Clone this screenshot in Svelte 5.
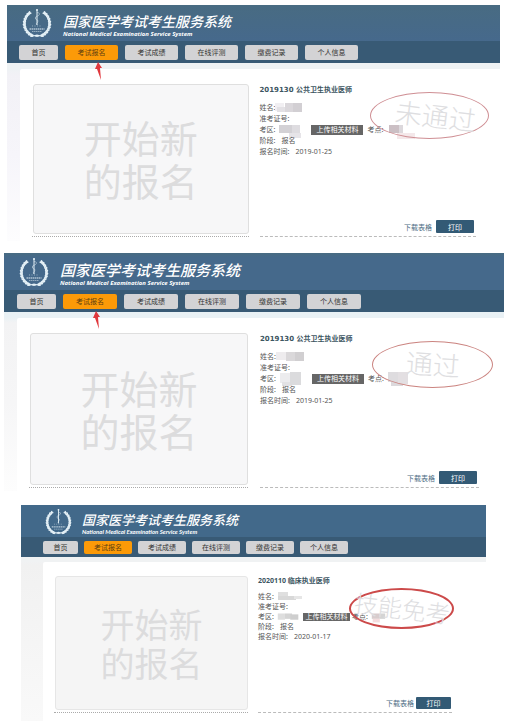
<script lang="ts">
  type Block = [x: number, y: number, w: number, h: number, color: string];

  type Panel = {
    id: string;
    exam: string;
    date: string;
    result: string;
    nameMask: Block[];
    areaMask: Block[];
    siteMask: Block[];
  };

  const menu = ["首页", "考试报名", "考试成绩", "在线评测", "缴费记录", "个人信息"];
  const active = "考试报名";

  const panels: Panel[] = [
    {
      id: "first",
      exam: "2019130 公共卫生执业医师",
      date: "2019-01-25",
      result: "未通过",
      nameMask: [
        [0, 1, 9, 8, "#f1eff2"],
        [2, 5, 8, 5, "#e3e1e5"],
        [10, 1, 8, 9, "#dad7db"],
        [18, 1, 9, 9, "#d2cfd3"],
      ],
      areaMask: [
        [0, 1, 13, 8, "#d3d1d5"],
        [13, 1, 8, 8, "#dedce0"],
        [10, 9, 12, 5, "#e6e4e8"],
      ],
      siteMask: [
        [2, 1, 10, 8, "#cbbfc4"],
        [12, 1, 4, 8, "#dcd8dc"],
        [10, 9, 18, 6, "#f4e8ea"],
      ],
    },
    {
      id: "second",
      exam: "2019130 公共卫生执业医师",
      date: "2019-01-25",
      result: "通过",
      nameMask: [
        [0, 1, 10, 8, "#eeecee"],
        [10, 1, 9, 9, "#dad8da"],
        [19, 1, 9, 9, "#d1cfd1"],
      ],
      areaMask: [
        [0, 0, 10, 10, "#ececee"],
        [2, 9, 10, 4, "#e2e2e4"],
        [10, -1, 11, 13, "#dbdbdd"],
      ],
      siteMask: [
        [0, -1, 10, 10, "#dedcdf"],
        [3, 8, 12, 5, "#dcd9dc"],
        [10, -1, 10, 12, "#e3dfe2"],
      ],
    },
    {
      id: "third",
      exam: "2020110 临床执业医师",
      date: "2020-01-17",
      result: "技能免考",
      nameMask: [
        [4, 0, 10, 4, "#dfdfdf"],
        [4, 4, 18, 4, "#d8d8d8"],
        [20, 4, 8, 3, "#e6e6e6"],
      ],
      areaMask: [
        [2, 1, 8, 7, "#dedede"],
        [10, 1, 8, 6, "#d4d4d4"],
        [16, 2, 9, 6, "#cecece"],
      ],
      siteMask: [
        [2, 1, 9, 6, "#d8cccd"],
        [11, 1, 6, 6, "#d4d4d4"],
        [3, 7, 8, 4, "#f4dcde"],
      ],
    },
  ];

  // laurel leaves, from the foot of the wreath up one side
  const leaves = Array.from({ length: 11 }, (_, i) => {
    const deg = 72 - i * 12;
    const rad = (deg * Math.PI) / 180;
    return { x: 30 + 25 * Math.cos(rad), y: 31 + 26 * Math.sin(rad), deg };
  });
</script>

{#snippet logo()}
  <svg class="logo" viewBox="0 0 60 60" aria-hidden="true">
    {#each [1, -1] as side}
      <g transform={side === 1 ? undefined : "translate(60 0) scale(-1 1)"}>
        {#each leaves as leaf}
          <g transform="translate({leaf.x} {leaf.y}) rotate({leaf.deg})">
            <ellipse cx="2" cy="-1" rx="4" ry="2" transform="rotate(-52)" />
            <ellipse cx="-2" cy="-1" rx="4" ry="1.8" transform="rotate(52)" />
          </g>
        {/each}
        <path d="M31 57 Q42 56 49 47" class="line" />
      </g>
    {/each}
    <path d="M30 3 V34" class="line staff" />
    <path d="M30 9 Q38 10 33 15 Q24 18 27 22 Q35 25 31 29 Q27 31 30 34" class="line" />
    <circle cx="30" cy="4" r="2" />
    <path d="M20 36 H40" class="line" stroke-dasharray="2 3" />
    <path d="M15 42 H45" class="line staff" stroke-dasharray="3 1" />
    <path d="M20 47 H40" class="line" stroke-dasharray="3 1" />
    <path d="M22 55 L30 53 L38 55 L30 58 Z" />
  </svg>
{/snippet}

{#snippet mosaic(blocks: Block[])}
  <svg class="mosaic" viewBox="0 0 28 11" aria-hidden="true">
    {#each blocks as [x, y, w, h, color]}
      <rect {x} {y} width={w} height={h} fill={color} />
    {/each}
  </svg>
{/snippet}

<main>
  {#each panels as panel (panel.id)}
    <section class="panel {panel.id}">
      <header>
        {@render logo()}
        <div class="brand">
          <h1>国家医学考试考生服务系统</h1>
          <p>National Medical Examination Service System</p>
        </div>
      </header>

      <nav>
        {#each menu as item}
          <a href="#{item}" class:active={item === active}>
            {item}
            {#if item === active && panel.id !== "third"}
              <svg class="arrow" viewBox="0 0 8 18" aria-hidden="true">
                <path d="M3 0 L0 7 L2 7 L6 18 L5 6 L7 6 Z" />
              </svg>
            {/if}
          </a>
        {/each}
      </nav>

      <div class="body">
        <div class="column">
          <button class="start">开始新<br />的报名</button>
        </div>

        <div class="column details">
          <h2>{panel.exam}</h2>
          <div class="row">姓名:{@render mosaic(panel.nameMask)}</div>
          <div class="row">准考证号:</div>
          <div class="row area">
            考区:
            {@render mosaic(panel.areaMask)}
            <button class="upload">上传相关材料</button>
            考点:
            {@render mosaic(panel.siteMask)}
          </div>
          <div class="row">阶段:<span>报名</span></div>
          <div class="row">报名时间:<span>{panel.date}</span></div>
          <div class="actions">
            <a href="#download">下载表格</a>
            <button class="print">打印</button>
          </div>
          <div class="stamp"><span>{panel.result}</span></div>
        </div>
      </div>
    </section>
  {/each}
</main>

<style>
  :global(body) {
    background: #fff;
  }

  main {
    display: flex;
    flex-direction: column;
    padding-top: 5px;
    font-family: "Noto Sans", "Noto Sans CJK SC", sans-serif;
    font-size: 7px;
    color: #555;
  }

  h1,
  h2,
  p {
    margin: 0;
  }

  button {
    padding: 0;
    border: 0;
    font: inherit;
    cursor: pointer;
  }

  .panel {
    --edge: 13px;
    --nav-start: 12px;
    --home: 39px;
    --tab: 53px;
    --tab-gap: 7px;
    --tab-height: 15px;
    --header: 36px;
    --nav: 22px;
    --logo: 30px;
    --card: 150px;
    --line: 11px;
    margin: 0 13px 12px 7px;
    background: linear-gradient(#eef2f4 64px, #f2f1f6 70px, #f6f5fa 150px, #fdfdfe 100%);
  }

  .second {
    --nav-start: 13px;
    --tab: 54px;
    --header: 37px;
    --card: 152px;
    margin: 0 9px 14px 4px;
    background: linear-gradient(#e9f1f5 64px, #f3f3f4 70px, #f6f6f7 150px, #fdfdfd 100%);
  }

  .third {
    --edge: 22px;
    --nav-start: 22px;
    --home: 35px;
    --tab: 48px;
    --tab-gap: 6px;
    --tab-height: 13px;
    --header: 32px;
    --nav: 20px;
    --logo: 27px;
    --card: 134px;
    --line: 10px;
    margin: 0 27px 0 21px;
    background: linear-gradient(#f0f2f3 56px, #f1f1f1 60px, #f9f9f9 100%);
  }

  header {
    display: flex;
    align-items: center;
    gap: 11px;
    height: var(--header);
    padding-left: 15px;
    background: linear-gradient(#486b82, #46698c);
    color: #fff;
  }

  .second header {
    background: linear-gradient(#486b82, #45698b 5px);
  }

  .third header {
    gap: 10px;
    padding-left: 24px;
    background: #42698a;
  }

  .logo {
    width: var(--logo);
    height: var(--logo);
    fill: #e4f0f6;
  }

  .logo .line {
    fill: none;
    stroke: #e4f0f6;
    stroke-width: 1;
  }

  .logo .staff {
    stroke-width: 2;
  }

  .brand {
    padding-top: 6px;
    font-style: italic;
    white-space: nowrap;
  }

  .brand h1 {
    font-family: "Liberation Sans", "Noto Sans CJK SC", sans-serif;
    font-size: 14px;
    font-weight: 500;
    line-height: 16px;
  }

  .brand p {
    font-family: "Open Sans", sans-serif;
    font-size: 6px;
    font-weight: 700;
    line-height: 8px;
  }

  .second .brand h1 {
    font-size: 15px;
    line-height: 17px;
  }

  .third .brand h1 {
    font-size: 13px;
    line-height: 15px;
  }

  .third .brand p {
    font-family: Lato, sans-serif;
  }

  nav {
    display: flex;
    align-items: center;
    gap: var(--tab-gap);
    height: var(--nav);
    padding-left: var(--nav-start);
    background: #385a75;
  }

  nav a {
    position: relative;
    width: var(--tab);
    height: var(--tab-height);
    border-radius: 2px;
    background: #d3d3d5;
    color: #333;
    line-height: var(--tab-height);
    text-align: center;
    text-decoration: none;
  }

  nav a:first-child {
    width: var(--home);
  }

  nav a.active {
    background: #fc9a08;
    color: #5f3e10;
  }

  .arrow {
    position: absolute;
    top: 17px;
    left: 30px;
    width: 8px;
    height: 18px;
    fill: #e0383d;
  }

  .body {
    display: grid;
    grid-template-columns: 1fr 1fr;
    gap: 11px;
    margin: 6px 0 0 var(--edge);
    padding: 15px 24px 4px 12px;
    border-top-left-radius: 2px;
    background: #fff;
  }

  .second .body {
    gap: 12px;
    padding: 15px 25px 3px 12px;
  }

  .third .body {
    gap: 10px;
    margin-top: 5px;
    padding: 14px 34px 8px 11px;
  }

  .column {
    display: flex;
    flex-direction: column;
    min-width: 0;
    padding-bottom: 2px;
    border-bottom: 1px dotted #aaa;
  }

  .start {
    height: var(--card);
    margin-left: 1px;
    padding-top: 5px;
    border: 1px solid #dfdfdf;
    border-radius: 3px;
    background: #f7f7f8;
    color: #dcdcdd;
    font-family: "Liberation Sans", "Noto Sans CJK SC", sans-serif;
    font-size: 38px;
    font-weight: 400;
    line-height: 43px;
  }

  .second .start {
    font-size: 39px;
  }

  .third .start {
    border-color: #e6e6e6;
    background: #f5f5f5;
    font-size: 34px;
    line-height: 39px;
  }

  .details {
    position: relative;
    border-bottom: 1px dashed #bbb;
    white-space: nowrap;
  }

  h2 {
    margin-bottom: 6px;
    color: #3c5561;
    font-family: "DejaVu Sans", "Noto Sans CJK SC", sans-serif;
    font-size: 7px;
    font-weight: 700;
    line-height: 12px;
  }

  .third h2 {
    font-family: "Noto Sans", "Noto Sans CJK SC", sans-serif;
    line-height: 10px;
  }

  .row {
    display: flex;
    align-items: center;
    height: var(--line);
    line-height: var(--line);
  }

  .row span {
    margin-left: 6px;
  }

  .mosaic {
    flex: none;
    width: 28px;
    height: 11px;
    overflow: visible;
  }

  .area {
    gap: 4px;
  }

  .third .area {
    gap: 2px;
  }

  .third .area .mosaic {
    width: 25px;
  }

  .upload {
    width: 52px;
    height: 10px;
    background: #666;
    color: #fff;
    line-height: 10px;
  }

  .third .upload {
    width: 47px;
    height: 8px;
    line-height: 8px;
  }

  .actions {
    display: flex;
    align-items: center;
    justify-content: flex-end;
    gap: 4px;
    margin: auto 2px 1px 0;
  }

  .third .actions {
    gap: 2px;
    margin-right: 1px;
  }

  .actions a {
    color: #4d6e84;
    text-decoration: none;
  }

  .print {
    width: 38px;
    height: 13px;
    border-radius: 1px;
    background: #335a75;
    color: #fff;
  }

  .third .print {
    width: 35px;
    height: 12px;
  }

  /* result mark lies over the applicant's details */
  .stamp {
    position: absolute;
    top: 8px;
    left: 110px;
    display: flex;
    align-items: center;
    justify-content: center;
    box-sizing: border-box;
    width: 119px;
    height: 47px;
    border: 1px solid #cf8f94;
    border-radius: 50%;
    color: #dedee1;
    font-size: 27px;
    font-weight: 300;
    line-height: 30px;
    pointer-events: none;
  }

  .stamp span {
    padding-left: 12px;
    transform: rotate(7deg);
  }

  .second .stamp {
    left: 112px;
    width: 121px;
    border-color: #cb8480;
  }

  .second .stamp span {
    padding-left: 0;
    transform: rotate(4deg);
  }

  .third .stamp {
    top: 12px;
    left: 91px;
    width: 105px;
    height: 41px;
    border: 2px solid #cc4a4a;
    font-size: 24px;
  }

  .third .stamp span {
    padding-left: 0;
  }
</style>
